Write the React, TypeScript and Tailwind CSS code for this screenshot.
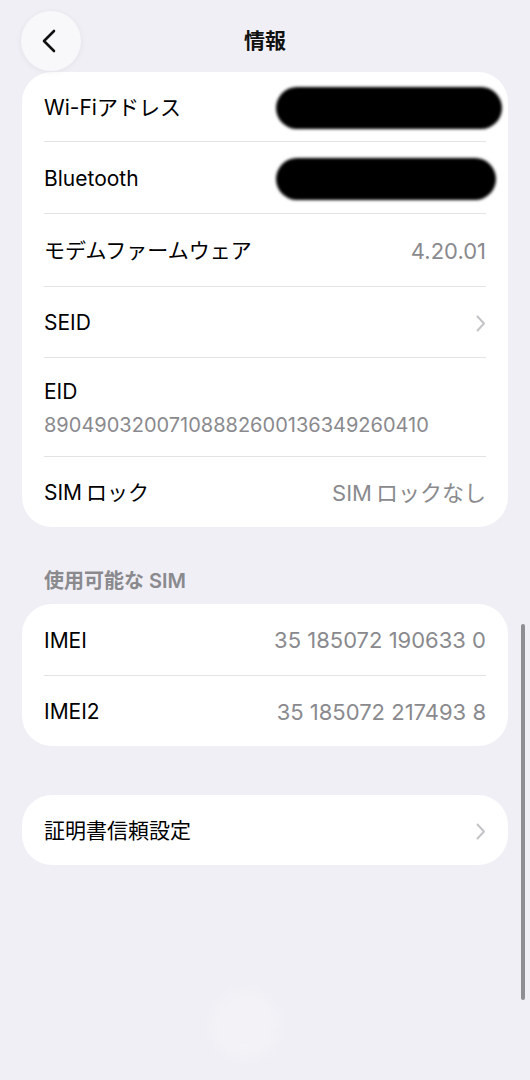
import React from "react";

const font = { fontFamily: 'Inter, "Noto Sans CJK JP", sans-serif' };

function Chevron() {
  return (
    <svg width="10" height="17" viewBox="0 0 10 17" fill="none">
      <path d="M1.5 1.5 L8 8.5 L1.5 15.5" stroke="#c4c4c8" strokeWidth="2" strokeLinecap="round" strokeLinejoin="round" />
    </svg>
  );
}

function Sep() {
  return <div className="mx-[22px] h-px bg-[#e3e3e6]" />;
}

function Row({ label, value, chevron, blob, h = "h-[71px]" }: { label: React.ReactNode; value?: React.ReactNode; chevron?: boolean; blob?: React.ReactNode; h?: string }) {
  return (
    <div className={`flex ${h} items-center justify-between px-[22px] pt-[2px]`}>
      <span className="text-[21px] text-black">{label}</span>
      {value && <span className="text-[22px] text-[#8a8a8e]">{value}</span>}
      {chevron && <Chevron />}
      {blob}
    </div>
  );
}

export default function App() {
  return (
    <div className="relative min-h-[1080px] w-[530px] overflow-hidden bg-[#f0eff5]" style={font}>
      {/* header */}
      <div className="relative flex h-[72px] items-center justify-center">
        <div className="absolute left-[21px] top-[11px] flex h-[60px] w-[60px] items-center justify-center rounded-full bg-[#f8f8fa] shadow-[0_1px_6px_rgba(0,0,0,0.06)]">
          <svg width="16" height="24" viewBox="0 0 16 24" fill="none" className="mr-[4px]">
            <path d="M13 2 L3 12 L13 22" stroke="#111" strokeWidth="2.6" strokeLinecap="round" strokeLinejoin="round" />
          </svg>
        </div>
        <span className="mt-[10px] text-[21px] font-bold text-[#111]">情報</span>
      </div>

      {/* card 1 */}
      <div className="mx-[22px] overflow-hidden rounded-[30px] bg-white">
        <Row
          h="h-[69px]"
          label="Wi-Fiアドレス"
          blob={<div className="mr-[-16px] h-[42px] w-[226px] rounded-full bg-black blur-[1.5px]" />}
        />
        <Sep />
        <Row
          label="Bluetooth"
          blob={<div className="mr-[-10px] h-[42px] w-[220px] rounded-full bg-black blur-[1.5px]" />}
        />
        <Sep />
        <Row h="h-[72px]" label="モデムファームウェア" value="4.20.01" />
        <Sep />
        <Row h="h-[70px]" label="SEID" chevron />
        <Sep />
        <div className="flex h-[98px] flex-col justify-center px-[22px] pt-[2px]">
          <span className="text-[21px] text-black">EID</span>
          <span className="mt-[2px] text-[20px] text-[#8a8a8e]">89049032007108882600136349260410</span>
        </div>
        <Sep />
        <Row
          h="h-[70px]"
          label={<>SIM<span className="ml-[4px]">ロック</span></>}
          value={<>SIM<span className="ml-[4px]">ロックなし</span></>}
        />
      </div>

      {/* section header */}
      <div className="mt-[40px] h-[29px] px-[44px] text-[20px] leading-[29px] font-semibold text-[#8a8a8e]">
        使用可能な<span className="ml-[5px]">SIM</span>
      </div>

      {/* card 2 */}
      <div className="mx-[22px] mt-[8px] overflow-hidden rounded-[30px] bg-white">
        <Row label="IMEI" value="35 185072 190633 0" />
        <Sep />
        <Row h="h-[70px]" label="IMEI2" value="35 185072 217493 8" />
      </div>

      {/* card 3 */}
      <div className="mx-[22px] mt-[49px] overflow-hidden rounded-[30px] bg-white">
        <div className="flex h-[70px] items-center justify-between px-[22px] pt-[2px]">
          <span className="text-[21px] text-black">証明書信頼設定</span>
          <Chevron />
        </div>
      </div>

      {/* scrollbar */}
      <div className="absolute left-[521px] top-[624px] h-[376px] w-[4px] rounded-full bg-[#8e8e93]" />
      {/* faint home glow */}
      <div className="absolute left-[212px] top-[992px] h-[66px] w-[66px] rounded-full bg-[#f5f5f8] opacity-70 blur-[6px]" />
    </div>
  );
}
